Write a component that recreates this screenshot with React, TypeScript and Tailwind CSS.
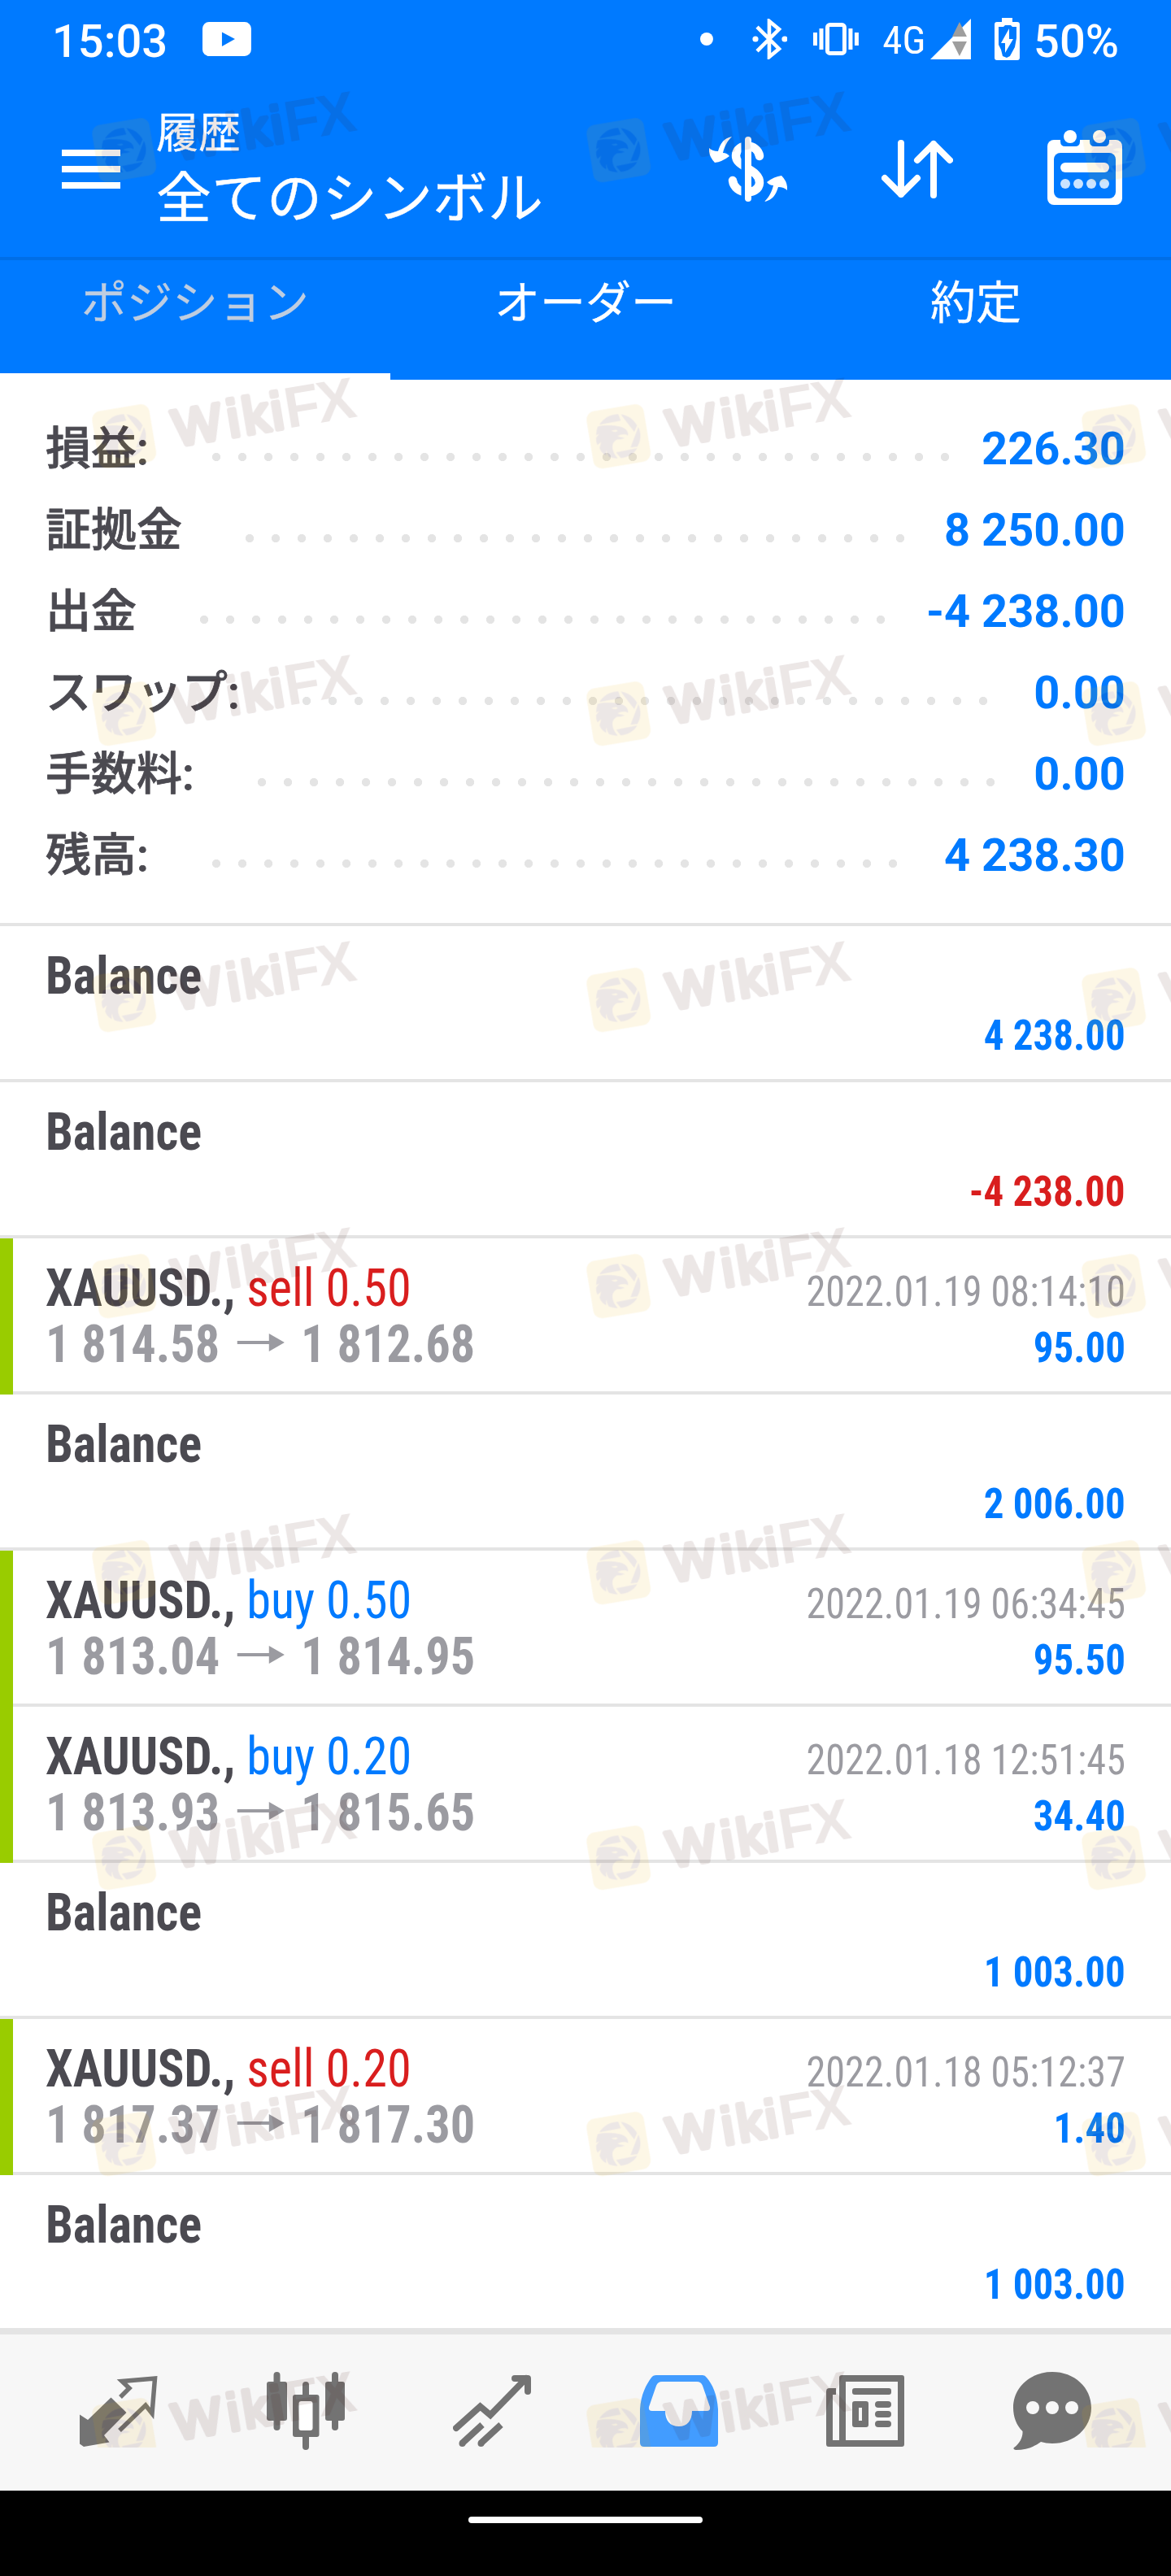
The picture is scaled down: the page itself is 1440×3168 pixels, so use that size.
import React from 'react';

const summary = [
  { label: '損益:', value: '226.30', dotsStart: 250, dots: 29 },
  { label: '証拠金', value: '8 250.00', dotsStart: 291, dots: 26 },
  { label: '出金', value: '-4 238.00', dotsStart: 235, dots: 27 },
  { label: 'スワップ:', value: '0.00', dotsStart: 361, dots: 27 },
  { label: '手数料:', value: '0.00', dotsStart: 306, dots: 29 },
  { label: '残高:', value: '4 238.30', dotsStart: 250, dots: 27 },
];

type Deal = {
  kind: 'balance' | 'trade';
  side?: 'sell' | 'buy';
  volume?: string;
  open?: string;
  close?: string;
  time?: string;
  profit: string;
};

const deals: Deal[] = [
  { kind: 'balance', profit: '4 238.00' },
  { kind: 'balance', profit: '-4 238.00' },
  { kind: 'trade', side: 'sell', volume: '0.50', open: '1 814.58', close: '1 812.68', time: '2022.01.19 08:14:10', profit: '95.00' },
  { kind: 'balance', profit: '2 006.00' },
  { kind: 'trade', side: 'buy', volume: '0.50', open: '1 813.04', close: '1 814.95', time: '2022.01.19 06:34:45', profit: '95.50' },
  { kind: 'trade', side: 'buy', volume: '0.20', open: '1 813.93', close: '1 815.65', time: '2022.01.18 12:51:45', profit: '34.40' },
  { kind: 'balance', profit: '1 003.00' },
  { kind: 'trade', side: 'sell', volume: '0.20', open: '1 817.37', close: '1 817.30', time: '2022.01.18 05:12:37', profit: '1.40' },
  { kind: 'balance', profit: '1 003.00' },
];

const StatusBar = () => (
  <div className="flex h-24 items-start pl-16 pr-[64px] pt-[19px] text-[56px] font-medium leading-[64px] text-white">
    <span className="w-[185px]">15:03</span>
    <svg className="mt-2 h-[42px] w-[60px]" viewBox="0 0 60 42">
      <rect width="60" height="42" rx="8" fill="#fff" />
      <path d="M24 12.5L40 21L24 30Z" fill="#007aff" />
    </svg>
    <svg className="ml-[552px] mt-[21px] h-4 w-4" viewBox="0 0 16 16">
      <circle cx="8" cy="8" r="8" fill="#fff" />
    </svg>
    {/* Bluetooth */}
    <svg className="ml-12 mt-1 h-[50px] w-11" viewBox="0 0 44 50" fill="none">
      <path d="M6 10L33 37L21 47V3L33 13L6 40" stroke="#fff" strokeWidth="4.6" />
      <circle cx="4" cy="25" r="3.6" fill="#fff" />
      <circle cx="40" cy="25" r="3.6" fill="#fff" />
    </svg>
    {/* Vibrate */}
    <svg className="ml-8 mt-[9px] h-10 w-14" viewBox="0 0 56 40" fill="#fff">
      <rect x="0" y="12" width="5" height="16" />
      <rect x="7.5" y="7" width="5" height="26" />
      <rect x="17.5" y="2.5" width="21" height="35" rx="3" fill="none" stroke="#fff" strokeWidth="5" />
      <rect x="43.5" y="7" width="5" height="26" />
      <rect x="51" y="12" width="5" height="16" />
    </svg>
    <span className="ml-[29px] w-[59px] whitespace-nowrap text-[49px] font-normal leading-[61px] [font-stretch:85%]">4G</span>
    {/* Signal */}
    <svg className="mt-1 h-[50px] w-[50px]" viewBox="0 0 50 50">
      <path d="M50 0V50H0Z" fill="#fff" />
      <path d="M36 4L45 22H27ZM27 28H45L36 46Z" fill="#9e9e9e" />
    </svg>
    {/* Battery */}
    <svg className="ml-[29px] mt-[3px] h-[52px] w-[31px]" viewBox="0 0 31 52">
      <path d="M9 0H22V5H28Q31 5 31 8V49Q31 52 28 52H3Q0 52 0 49V8Q0 5 3 5H9Z" fill="#fff" />
      <path d="M13 9H20L22 11H27V25L25 36L19 47L15 49L10 47L8 39L5 33V11H11Z" fill="#007aff" />
      <path d="M18 13V26H23L13 43V31H8Z" fill="#fff" />
    </svg>
    <span className="ml-[17px]">50%</span>
  </div>
);

const TitleBar = () => (
  <div className="flex h-[224px] items-start border-b-4 border-[#006ee6] text-white">
    <div className="ml-[76px] mt-[88px] flex w-[72px] flex-col gap-3">
      <div className="h-2 bg-white" />
      <div className="h-2 bg-white" />
      <div className="h-2 bg-white" />
    </div>
    <div className="ml-11 w-[680px] pt-[29px]">
      <div className="text-[52px] leading-[80px] [-webkit-text-stroke:0.3px]">履歴</div>
      <div className="text-[68px] leading-[80px] [-webkit-text-stroke:0.4px]">全てのシンボル</div>
    </div>
    {/* Symbol filter */}
    <svg className="mt-[72px] h-20 w-24" viewBox="0 0 96 80" fill="none">
      <path
        d="M62 24C60 8 34 7 33 23C32 38 63 40 62 57C61 73 31 72 29 54"
        stroke="#fff"
        strokeWidth="10.5"
        strokeLinecap="round"
      />
      <path d="M42 0V80" stroke="#007aff" strokeWidth="5" />
      <path d="M48 4V76" stroke="#fff" strokeWidth="8" strokeLinecap="round" />
      <path d="M28 0C18 2 14 8 11 18Q4 18 0 14Q-1 24 7 32Q16 31 25 24Q22 20 17 20C19 12 22 6 28 0Z" fill="#fff" />
      <path d="M28 0C18 2 14 8 11 18Q4 18 0 14Q-1 24 7 32Q16 31 25 24Q22 20 17 20C19 12 22 6 28 0Z" fill="#fff" transform="rotate(180 48 40)" />
    </svg>
    {/* Sort */}
    <svg className="ml-[116px] mt-[76px] h-[72px] w-[88px]" viewBox="0 0 88 72" fill="none" stroke="#fff" strokeWidth="8" strokeLinecap="round" strokeLinejoin="round">
      <path d="M24 4V67M4 47L24 67L44 47" />
      <path d="M64 68V5M44 25L64 5L84 25" />
    </svg>
    {/* Calendar */}
    <svg className="ml-[116px] mt-16 h-[92px] w-[92px]" viewBox="0 0 92 92">
      <rect y="12" width="92" height="80" rx="8" fill="#fff" />
      <path d="M16 8H40V14Q40 20 34 20H22Q16 20 16 14ZM52 8H76V14Q76 20 70 20H58Q52 20 52 14Z" fill="#007aff" />
      <circle cx="28" cy="8" r="8" fill="#fff" />
      <circle cx="64" cy="8" r="8" fill="#fff" />
      <rect x="8" y="28" width="76" height="56" rx="8" fill="#007aff" />
      <rect x="16" y="40" width="60" height="12" rx="6" fill="#fff" />
      <g fill="#cce4ff">
        <circle cx="22" cy="66" r="6" />
        <circle cx="38" cy="66" r="6" />
        <circle cx="54" cy="66" r="6" />
        <circle cx="70" cy="66" r="6" />
      </g>
    </svg>
  </div>
);

const Tabs = () => (
  <div className="grid h-[147px] grid-cols-3 text-center text-[56px] leading-[64px] text-white [-webkit-text-stroke:0.3px]">
    <div className="border-b-8 border-white pt-[21px] text-[#bfcde0]">ポジション</div>
    <div className="pt-[21px]">オーダー</div>
    <div className="pt-[21px]">約定</div>
  </div>
);

const Summary = () => (
  <div className="border-b-4 border-[#e4e4e4] pb-[33px] pl-14 pr-14 pt-[35px]">
    {summary.map((row) => (
      <div key={row.label} className="flex h-[100px] items-center text-[56px] leading-[100px]">
        <span
          className="shrink-0 whitespace-nowrap font-medium text-[#4b4a51] [-webkit-text-stroke:0.8px]"
          style={{ width: row.dotsStart - 56 }}
        >
          {row.label}
        </span>
        <span
          className="mt-5 h-3 shrink-0 bg-[radial-gradient(circle,#e4e4e4_4.8px,transparent_5.4px)] bg-[length:32px_12px]"
          style={{ width: row.dots * 32 }}
        />
        <span className="ml-auto whitespace-nowrap font-bold text-[#007aff]">{row.value}</span>
      </div>
    ))}
  </div>
);

const DealRow = ({ deal }: { deal: Deal }) => (
  <div className="flex h-48 whitespace-nowrap [font-stretch:75%]">
    <div className={deal.kind === 'trade' ? 'w-4 bg-[#99cc00]' : 'w-4 border-b-4 border-[#e4e4e4]'} />
    <div className="flex flex-1 justify-between border-b-4 border-[#e4e4e4] pl-10 pr-14">
      <div className="origin-left scale-x-[0.942] pt-[27px] text-[64px] font-bold leading-[69px] text-[#4b4a51]">
        {deal.kind === 'balance' ? (
          <div>Balance</div>
        ) : (
          <>
            <div>
              XAUUSD.,{' '}
              <span className={deal.side === 'sell' ? 'font-normal text-[#d91e1e]' : 'font-normal text-[#007aff]'}>
                {deal.side} {deal.volume}
              </span>
            </div>
            <div className="flex items-center text-[#9b9ba1]">
              <span>{deal.open}</span>
              <svg className="ml-[23px] mr-[21px] mt-[-5px] h-[22px] w-[62px]" viewBox="0 0 58 22" preserveAspectRatio="none" fill="#9b9ba1">
                <path d="M0 9H39V0L58 11L39 22V13H0Z" />
              </svg>
              <span>{deal.close}</span>
            </div>
          </>
        )}
      </div>
      <div className="pt-[31px] text-right text-[52px] leading-[69px]">
        <div className="h-[69px] origin-right scale-x-[0.928] text-[#9b9ba1]">{deal.time}</div>
        <div
          className={
            deal.profit.startsWith('-')
              ? 'origin-right scale-x-[0.942] font-bold text-[#d91e1e]'
              : 'origin-right scale-x-[0.942] font-bold text-[#007aff]'
          }
        >
          {deal.profit}
        </div>
      </div>
    </div>
  </div>
);

const BottomNav = () => (
  <div className="flex h-[196px] items-start justify-between border-t-4 border-[#e4e4e4] bg-[#f7f7f7] px-[98px] pt-[46px]">
    {/* Quotes */}
    <svg className="h-24 w-24" viewBox="0 0 96 96" fill="none">
      <path d="M50 31L61 20L52 11.5L92.5 8L89 51L81 41L49 72" stroke="#737373" strokeWidth="5.5" />
      <path d="M0 52.5L10 59L38.5 31.5L57.5 50L30 78L36.5 86.5L5 92L0 88.5Z" fill="#737373" />
    </svg>
    {/* Charts */}
    <svg className="h-24 w-24" viewBox="0 0 96 96" fill="#737373">
      <rect x="8.5" y="0" width="8" height="72" rx="4" />
      <rect x="0" y="12" width="25" height="48" rx="3" />
      <rect x="80" y="0" width="8" height="72" rx="4" />
      <rect x="72" y="12" width="24" height="48" rx="3" />
      <rect x="44" y="12" width="8" height="84" rx="4" />
      <rect x="32" y="28" width="32.5" height="52" rx="3" />
      <rect x="39.5" y="36" width="17" height="36" rx="3" fill="#fff" />
    </svg>
    {/* Trade */}
    <svg className="h-24 w-24" viewBox="0 0 96 96" fill="none" stroke="#737373" strokeWidth="8">
      <path d="M4 69L33.5 42.5L46 53L90 8" strokeLinecap="round" />
      <path d="M76 8H92V24" strokeLinecap="round" strokeLinejoin="round" />
      <path d="M11 88L36 65M34 88L59 65" />
      <circle cx="11.5" cy="88" r="4" fill="#737373" stroke="none" />
      <circle cx="34.5" cy="88" r="4" fill="#737373" stroke="none" />
    </svg>
    {/* History */}
    <svg className="h-24 w-24" viewBox="0 0 96 96">
      <path d="M0 46C1 28 8 15 14 7Q16 4 20 4H77Q80 4 82 7C89 15 95 28 96 46V87Q96 92 91 92H5Q0 92 0 87Z" fill="#429cff" />
      <path d="M27 12H70Q75 12 77 17L86 43Q87 48 82 48H64C64 60 58 67 48 67C37 67 31 60 31 48H15Q10 48 11 43L20 17Q22 12 27 12Z" fill="#f7f7f7" />
    </svg>
    {/* News */}
    <svg className="h-24 w-24" viewBox="0 0 96 96" fill="#737373">
      <path fillRule="evenodd" d="M19 4H93Q96 4 96 7V89Q96 92 93 92H3Q0 92 0 89V24Q0 20 4 20H12V28H8V84H16V7Q16 4 19 4ZM24 12V84H88V12Z" />
      <rect x="32" y="20" width="48" height="8" rx="3" />
      <path fillRule="evenodd" d="M35 36H49Q52 36 52 39V65Q52 68 49 68H35Q32 68 32 65V39Q32 36 35 36ZM40 44V60H44V44Z" />
      <rect x="60" y="36" width="20" height="8" rx="4" />
      <rect x="60" y="48" width="20" height="8" rx="4" />
      <rect x="60" y="60" width="20" height="8" rx="4" />
    </svg>
    {/* Messages */}
    <svg className="h-24 w-24" viewBox="0 0 96 96" fill="#737373">
      <path d="M48 0C75 0 96 19 96 44S75 88 48 88C43 88 38 87 34 86C26 92 16 96 3 96Q-1 95 1 93C8 88 12 80 11.5 73C4 66 0 55 0 44C0 19 21 0 48 0Z" />
      <circle cx="24" cy="44" r="8" fill="#f7f7f7" />
      <circle cx="48" cy="44" r="8" fill="#f7f7f7" />
      <circle cx="72" cy="44" r="8" fill="#f7f7f7" />
    </svg>
  </div>
);

const markRows = [144, 495.5, 837, 1188.5, 1541, 1892.5, 2244, 2596, 2948];
const markColumns = [112.5, 720, 1329];

const Watermark = ({ x, y }: { x: number; y: number }) => (
  <svg className="absolute h-[122px] w-[334px] overflow-visible" viewBox="50 95 1002 366" style={{ left: x - 3.3, top: y - 37 }}>
    <g opacity="0.1">
      <rect x="74" y="221" width="214" height="214" rx="32" fill="#ebaf05" transform="rotate(-9.5 181 328)" />
      <g fill="#400a00">
        <path d="M110 285C124 262 150 246 180 246L189 270Z" />
        <path d="M189 247C215 250 236 265 249 288L239 311Z" />
        <path d="M254 293C264 315 265 342 250 366L225 369Z" />
        <path d="M172 387L250 371C237 393 215 405 189 408Z" />
        <path d="M104 292C125 286 155 287 176 290C203 293 218 306 216 325C208 318 192 319 177 327C190 332 200 333 205 333C190 341 178 338 172 341C150 354 156 384 178 409C164 410 152 406 145 403Q137 392 136 378Q132 388 136 399C122 392 113 380 111 370L117 348L103 360Q97 347 98 333L110 318L98 324Q99 305 104 292Z" />
        <path d="M154 307Q166 315 178 308L172 304Z" fill="#ebaf05" />
      </g>
      <g transform="translate(386 372) rotate(-9.5)" fill="#400a00" stroke="#400a00" strokeLinejoin="round">
        <text x="-12 191 249 355" y="-10" fontFamily="Liberation Sans" fontSize="190" strokeWidth="18">
          Wiki
        </text>
        <text x="405 527" y="-6" fontFamily="Liberation Sans" fontWeight="700" fontSize="213" strokeWidth="0">
          FX
        </text>
      </g>
    </g>
  </svg>
);

const App = () => {
  return (
    <div className="relative flex h-[3168px] w-[1440px] flex-col overflow-hidden bg-white font-['Roboto','Noto_Sans_CJK_JP',sans-serif]">
      <header className="bg-[#007aff]">
        <StatusBar />
        <TitleBar />
        <Tabs />
      </header>

      <Summary />

      <div>
        {deals.map((deal, i) => (
          <DealRow key={i} deal={deal} />
        ))}
      </div>

      <BottomNav />

      {/* System gesture bar */}
      <div className="flex flex-1 justify-center bg-black pt-8">
        <div className="h-2 w-72 rounded-full bg-white" />
      </div>

      <div className="pointer-events-none absolute left-0 top-0 h-[3010px] w-[1440px] overflow-hidden">
        {markRows.map((y) => markColumns.map((x) => <Watermark key={`${x}-${y}`} x={x} y={y} />))}
      </div>
    </div>
  );
};

export default App;
